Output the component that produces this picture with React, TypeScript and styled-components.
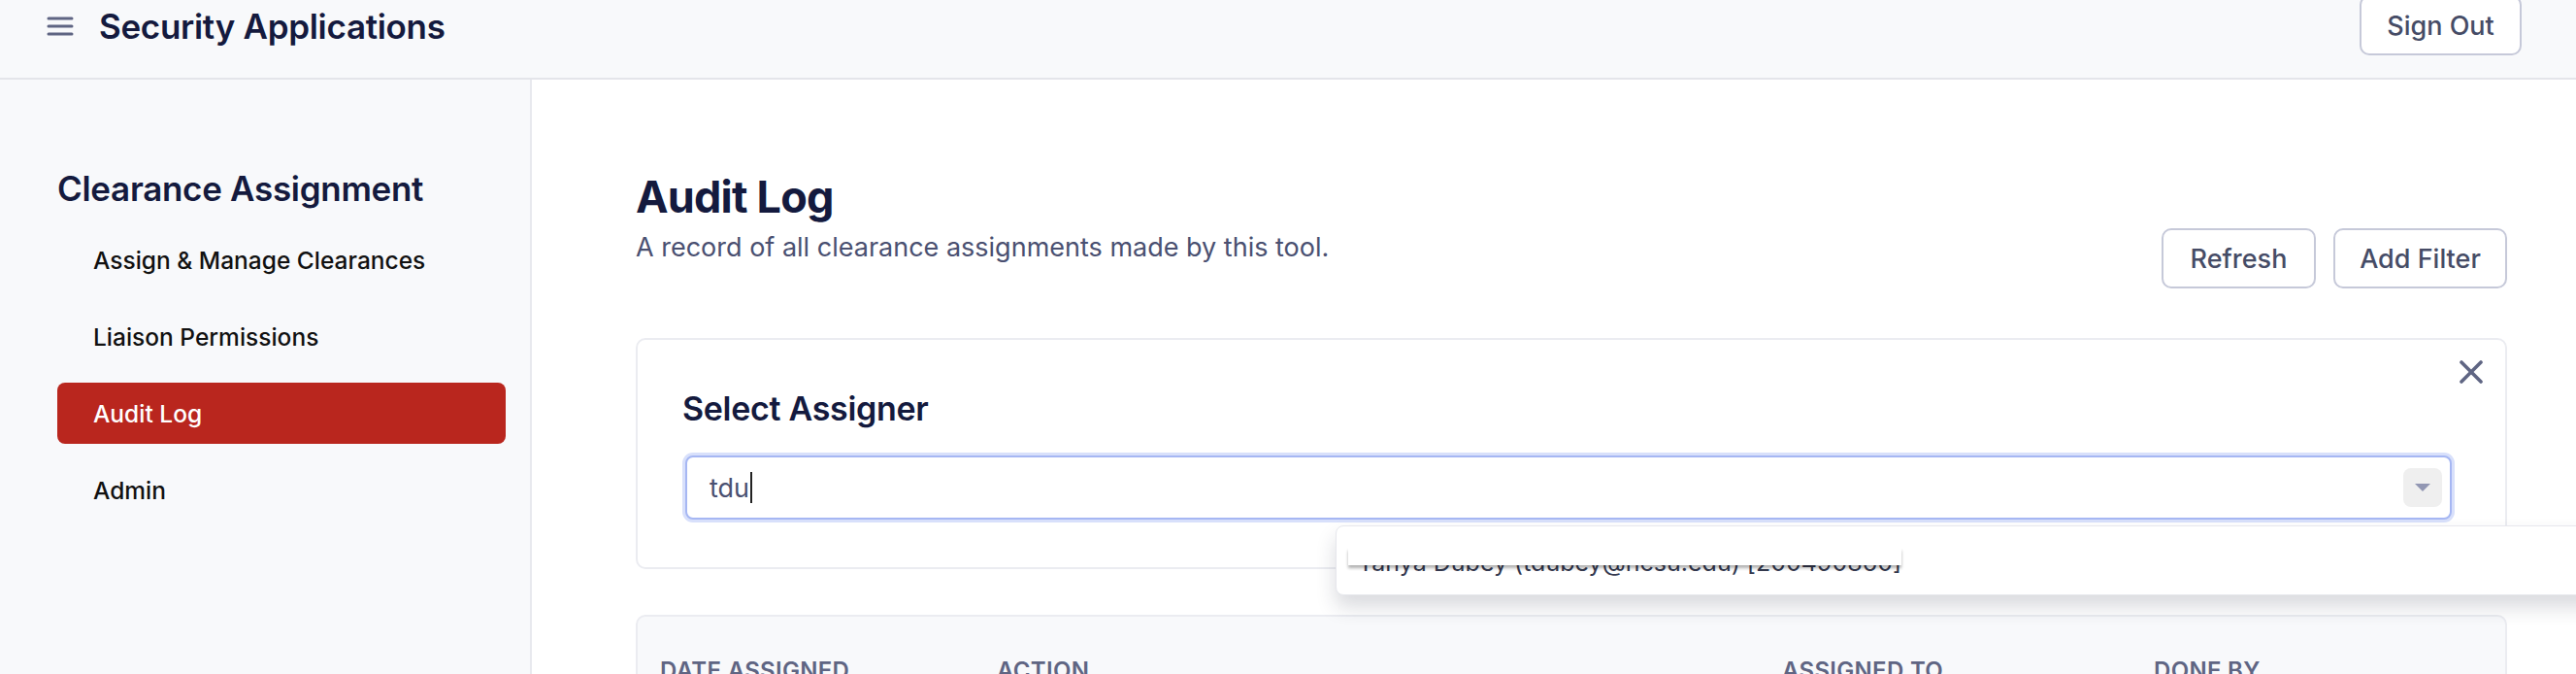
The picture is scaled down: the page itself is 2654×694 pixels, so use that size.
import React from "react";
import styled, { createGlobalStyle } from "styled-components";

const GlobalStyle = createGlobalStyle`
  html, body {
    margin: 0;
    padding: 0;
    height: 694px;
    overflow: hidden;
    background: #ffffff;
  }
  body {
    font-family: Inter, "Noto Sans", "Liberation Sans", sans-serif;
    -webkit-font-smoothing: antialiased;
  }
  * { box-sizing: border-box; }
`;

const Page = styled.div`
  display: flex;
  flex-direction: column;
  width: 2654px;
  height: 694px;
  overflow: hidden;
`;

const TopBar = styled.header`
  flex: 0 0 82px;
  display: flex;
  align-items: flex-start;
  justify-content: space-between;
  padding: 0 56px 0 48px;
  background: #f8f9fb;
  border-bottom: 2px solid #e4e5ea;
`;

const Brand = styled.div`
  display: flex;
  align-items: center;
  gap: 26px;
  height: 54px;
`;

const MenuIcon = styled.svg`
  width: 28px;
  height: 22px;
  color: #5f6583;
`;

const BrandTitle = styled.h1`
  margin: 0;
  font-size: 35px;
  font-weight: 600;
  color: #141a3e;
  letter-spacing: -0.3px;
`;

const OutlineButton = styled.button<{ $width: number }>`
  width: ${(p) => p.$width}px;
  height: 62px;
  border: 2px solid #c6c9d9;
  border-radius: 10px;
  background: #ffffff;
  color: #464c66;
  font-family: inherit;
  font-size: 27px;
  font-weight: 500;
  padding: 0;
  cursor: pointer;
`;

const SignOut = styled(OutlineButton)`
  margin-top: -5px;
`;

const Body = styled.div`
  flex: 1;
  display: flex;
  min-height: 0;
`;

const Sidebar = styled.nav`
  flex: 0 0 548px;
  background: #f8f9fb;
  border-right: 2px solid #e8e9ee;
  padding: 90px 25px 0 59px;
`;

const SideHeading = styled.h2`
  margin: 0 0 20px;
  font-size: 35px;
  line-height: 44px;
  font-weight: 600;
  color: #141a3e;
  letter-spacing: -0.3px;
`;

const NavList = styled.div`
  display: flex;
  flex-direction: column;
  gap: 16px;
`;

const NavItem = styled.a<{ $active?: boolean }>`
  display: flex;
  align-items: center;
  height: 63px;
  padding-left: 37px;
  border-radius: 8px;
  font-size: 24.5px;
  font-weight: 500;
  text-decoration: none;
  color: ${(p) => (p.$active ? "#ffffff" : "#111111")};
  background: ${(p) => (p.$active ? "#b9261e" : "transparent")};
`;

const Main = styled.main`
  flex: 1;
  padding: 93px 71px 0 107px;
  background: #ffffff;
  min-width: 0;
`;

const TitleRow = styled.div`
  display: flex;
  justify-content: space-between;
  align-items: flex-start;
  margin-bottom: 51px;
`;

const TitleBlock = styled.div`
  display: flex;
  flex-direction: column;
  gap: 6px;
`;

const PageTitle = styled.h1`
  margin: 0;
  font-size: 45px;
  line-height: 56px;
  font-weight: 700;
  color: #141a3e;
  letter-spacing: -0.8px;
`;

const Subtitle = styled.p`
  margin: 0;
  font-size: 27px;
  line-height: 36px;
  color: #4a5071;
`;

const ButtonGroup = styled.div`
  display: flex;
  gap: 18px;
  padding-top: 60px;
`;

const FilterCard = styled.section`
  position: relative;
  border: 2px solid #ebecf1;
  border-radius: 10px;
  background: #ffffff;
  padding: 50px 52px 49px 46px;
`;

const CloseButton = styled.button`
  position: absolute;
  top: 18px;
  right: 20px;
  width: 30px;
  height: 30px;
  padding: 0;
  border: 0;
  background: transparent;
  color: #5f6583;
  display: flex;
  align-items: center;
  justify-content: center;
`;

const CardHeading = styled.h3`
  margin: 0 0 27px;
  font-size: 34px;
  line-height: 42px;
  font-weight: 600;
  color: #141a3e;
  letter-spacing: -0.3px;
`;

const SelectWrap = styled.div`
  position: relative;
`;

const SelectBox = styled.div`
  display: flex;
  align-items: center;
  justify-content: space-between;
  height: 66px;
  margin: 0 3px;
  padding: 0 8px 0 23px;
  border: 2px solid #a6b7f3;
  border-radius: 8px;
  box-shadow: 0 0 0 3px #d8e0fb;
  background: #ffffff;
`;

const SelectValue = styled.span`
  display: flex;
  align-items: center;
  font-size: 27px;
  color: #4a5071;
`;

const Caret = styled.span`
  display: inline-block;
  width: 2px;
  height: 32px;
  margin-left: 1px;
  background: #222222;
`;

const ArrowBox = styled.span`
  width: 40px;
  height: 40px;
  border-radius: 8px;
  background: #efefef;
  display: flex;
  align-items: center;
  justify-content: center;
`;

const Triangle = styled.span`
  width: 0;
  height: 0;
  border-left: 8px solid transparent;
  border-right: 8px solid transparent;
  border-top: 8px solid #9297b3;
`;

const Menu = styled.div`
  position: absolute;
  top: 72px;
  left: 673px;
  width: 1400px;
  height: 72px;
  z-index: 5;
  background: #ffffff;
  border: 1px solid #e6e7ec;
  border-radius: 8px;
  box-shadow: 0 12px 20px rgba(30, 35, 60, 0.17);
  padding: 22px 0 0 22px;
`;

const MenuOption = styled.div`
  position: relative;
  display: inline-block;
  font-size: 25px;
  line-height: 30px;
  color: #34394f;
  &::after {
    content: "";
    position: absolute;
    left: -10px;
    right: 0;
    top: 0;
    height: 18px;
    background: #ffffff;
    box-shadow: 0 3px 3px rgba(0, 0, 0, 0.3);
  }
`;

const TableCard = styled.section`
  margin-top: 47px;
  background: #f8f9fb;
  border: 2px solid #ebecf1;
  border-bottom: 0;
  border-radius: 10px 10px 0 0;
  padding: 41px 0 0 23px;
`;

const HeaderRow = styled.div`
  display: grid;
  grid-template-columns: 347px 809px 383px 1fr;
`;

const HeaderCell = styled.div`
  font-size: 24px;
  line-height: 30px;
  font-weight: 600;
  text-transform: uppercase;
  letter-spacing: 0.3px;
  color: #5f6583;
`;

const navItems = [
  { label: "Assign & Manage Clearances" },
  { label: "Liaison Permissions" },
  { label: "Audit Log", active: true },
  { label: "Admin" },
];

const columns = ["Date Assigned", "Action", "Assigned To", "Done By"];

export default function App() {
  return (
    <>
      <GlobalStyle />
      <Page>
        <TopBar>
          <Brand>
            <MenuIcon viewBox="0 0 28 22" fill="none">
              <path
                d="M2 3h24M2 11h24M2 19h24"
                stroke="currentColor"
                strokeWidth="3"
                strokeLinecap="round"
              />
            </MenuIcon>
            <BrandTitle>Security Applications</BrandTitle>
          </Brand>
          <SignOut $width={167}>Sign Out</SignOut>
        </TopBar>
        <Body>
          <Sidebar>
            <SideHeading>Clearance Assignment</SideHeading>
            <NavList>
              {navItems.map((item) => (
                <NavItem key={item.label} $active={item.active}>
                  {item.label}
                </NavItem>
              ))}
            </NavList>
          </Sidebar>
          <Main>
            <TitleRow>
              <TitleBlock>
                <PageTitle>Audit Log</PageTitle>
                <Subtitle>A record of all clearance assignments made by this tool.</Subtitle>
              </TitleBlock>
              <ButtonGroup>
                <OutlineButton $width={159}>Refresh</OutlineButton>
                <OutlineButton $width={179}>Add Filter</OutlineButton>
              </ButtonGroup>
            </TitleRow>
            <FilterCard>
              <CloseButton aria-label="Close">
                <svg width="26" height="26" viewBox="0 0 26 26" fill="none">
                  <path
                    d="M3 3l20 20M23 3L3 23"
                    stroke="currentColor"
                    strokeWidth="3.6"
                    strokeLinecap="round"
                  />
                </svg>
              </CloseButton>
              <CardHeading>Select Assigner</CardHeading>
              <SelectWrap>
                <SelectBox>
                  <SelectValue>
                    tdu
                    <Caret />
                  </SelectValue>
                  <ArrowBox>
                    <Triangle />
                  </ArrowBox>
                </SelectBox>
                <Menu>
                  <MenuOption>Tanya Dubey (tdubey@ncsu.edu) [200490860]</MenuOption>
                </Menu>
              </SelectWrap>
            </FilterCard>
            <TableCard>
              <HeaderRow>
                {columns.map((c) => (
                  <HeaderCell key={c}>{c}</HeaderCell>
                ))}
              </HeaderRow>
            </TableCard>
          </Main>
        </Body>
      </Page>
    </>
  );
}
